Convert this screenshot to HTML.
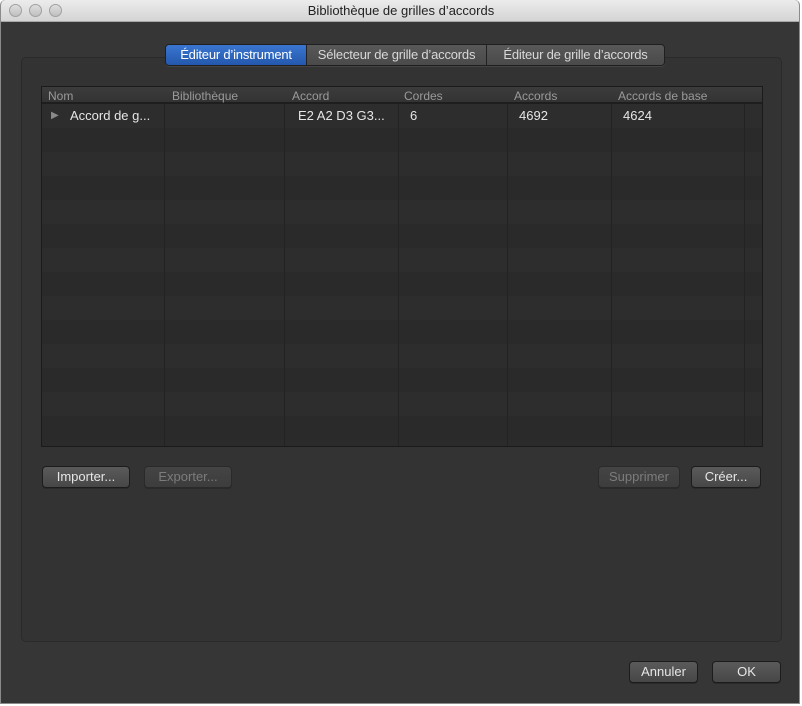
<!DOCTYPE html>
<html><head><style>
*{margin:0;padding:0;box-sizing:border-box}
body{width:802px;height:706px;background:#fff;font-family:"Liberation Sans",sans-serif;font-size:12px;overflow:hidden;position:relative}
#win{position:absolute;left:0;top:0;width:800px;height:704px;background:#363636;border:1px solid #8a8a8a;border-top:none;border-radius:5px 5px 0 0;overflow:hidden}
#title{position:absolute;left:0;top:0;width:800px;height:22px;background:linear-gradient(#ececec,#d4d4d4);border-bottom:1px solid #a8a8a8;text-align:center;line-height:22px;font-size:13px;color:#222}
.light{position:absolute;top:4px;width:13px;height:13px;border-radius:50%;background:linear-gradient(#dedede,#c0c0c0);border:1px solid #a0a0a0}
#panel{position:absolute;left:20px;top:57px;width:761px;height:585px;border:1px solid #2a2a2a;border-radius:5px;background:#333}
#tabs{position:absolute;left:164px;top:44px;height:22px;display:flex;border:1px solid #1f1f1f;border-radius:4px;overflow:hidden;box-shadow:0 1px 0 #444}
.tab{height:20px;line-height:20px;color:#d8d8d8;font-size:13px;background:linear-gradient(#585858,#4a4a4a);border-left:1px solid #222;text-align:center;white-space:nowrap;letter-spacing:-0.2px}
.tab.sel{background:linear-gradient(#3a76d0,#2358ad);color:#fff;border-left:none}
#table{position:absolute;left:40px;top:86px;width:722px;height:361px;border:1px solid #1a1a1a;background:#2b2b2b;overflow:hidden}
.hdr{position:absolute;left:0;top:0;width:720px;height:17px;background:linear-gradient(#3c3c3c,#333);border-bottom:2px solid #1e1e1e;color:#9a9a9a;font-size:12px}
.hdr span,.row span{position:absolute;top:2px}
.row{position:absolute;left:0;width:720px;height:24px;color:#e6e6e6;font-size:13px}
.row span{top:4px}
.vl{position:absolute;top:0;width:1px;height:361px;background:#232323}
.btn{position:absolute;height:22px;border:1px solid #1c1c1c;border-radius:4px;background:linear-gradient(#5a5a5a,#474747);color:#e6e6e6;font-size:13px;text-align:center;line-height:20px;box-shadow:0 1px 0 #2a2a2a}
.btn.dis{color:#7c7c7c;background:linear-gradient(#444,#3d3d3d);border-color:#2a2a2a}
</style></head><body>
<div id="win">
<div id="title">Bibliothèque de grilles d’accords
<div class="light" style="left:8px"></div><div class="light" style="left:28px"></div><div class="light" style="left:48px"></div></div>
<div id="panel"></div>
<div id="tabs"><div class="tab sel" style="width:140px">Éditeur d’instrument</div><div class="tab" style="width:180px">Sélecteur de grille d’accords</div><div class="tab" style="width:178px">Éditeur de grille d’accords</div></div>
<div id="table">
<div class="row" style="top:17px;background:#2d2d2d"></div>
<div class="row" style="top:41px;background:#2a2a2a"></div>
<div class="row" style="top:65px;background:#2d2d2d"></div>
<div class="row" style="top:89px;background:#2a2a2a"></div>
<div class="row" style="top:113px;background:#2d2d2d"></div>
<div class="row" style="top:137px;background:#2a2a2a"></div>
<div class="row" style="top:161px;background:#2d2d2d"></div>
<div class="row" style="top:185px;background:#2a2a2a"></div>
<div class="row" style="top:209px;background:#2d2d2d"></div>
<div class="row" style="top:233px;background:#2a2a2a"></div>
<div class="row" style="top:257px;background:#2d2d2d"></div>
<div class="row" style="top:281px;background:#2a2a2a"></div>
<div class="row" style="top:305px;background:#2d2d2d"></div>
<div class="row" style="top:329px;background:#2a2a2a"></div>
<div class="vl" style="left:122px"></div><div class="vl" style="left:242px"></div><div class="vl" style="left:356px"></div><div class="vl" style="left:465px"></div><div class="vl" style="left:569px"></div><div class="vl" style="left:702px"></div>
<div class="hdr"><span style="left:6px">Nom</span><span style="left:130px">Bibliothèque</span><span style="left:250px">Accord</span><span style="left:362px">Cordes</span><span style="left:472px">Accords</span><span style="left:576px">Accords de base</span></div>
<div class="row" style="top:17px"><span style="left:9px;color:#8a8a8a;font-size:10px;top:6px">▶</span><span style="left:28px">Accord de g...</span><span style="left:256px">E2 A2 D3 G3...</span><span style="left:368px">6</span><span style="left:477px">4692</span><span style="left:581px">4624</span></div>
</div>
<div class="btn" style="left:41px;top:466px;width:88px">Importer...</div>
<div class="btn dis" style="left:143px;top:466px;width:88px">Exporter...</div>
<div class="btn dis" style="left:597px;top:466px;width:82px">Supprimer</div>
<div class="btn" style="left:690px;top:466px;width:70px">Créer...</div>
<div class="btn" style="left:628px;top:661px;width:69px">Annuler</div>
<div class="btn" style="left:711px;top:661px;width:69px">OK</div>
</div>
</body></html>
